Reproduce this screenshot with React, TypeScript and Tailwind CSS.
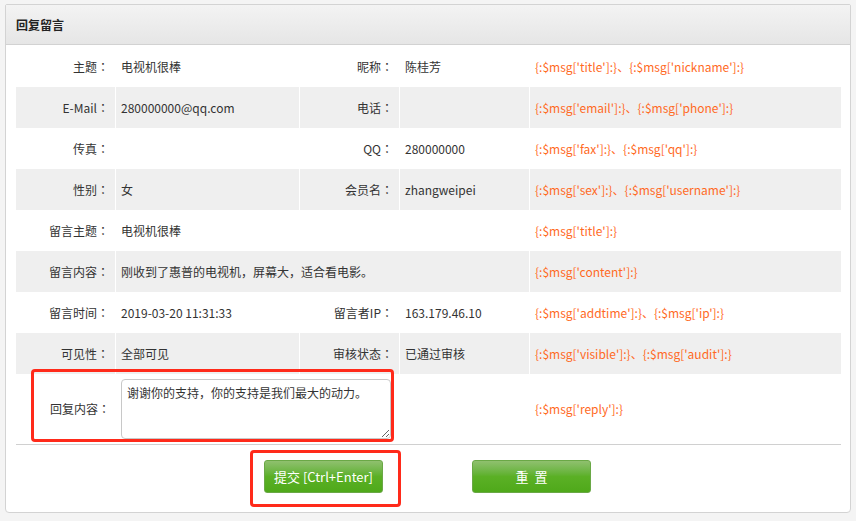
import React from "react";

const font = { fontFamily: '"Microsoft YaHei", "Noto Sans CJK SC", "Noto Sans", sans-serif' };
const colonFont = { fontFamily: '"Noto Sans CJK JP", "Noto Sans CJK TC", sans-serif' };

type Cell = { text?: string; kind: "label" | "value" | "code"; w: string };

function LabelText({ t }: { t: string }) {
  const base = t.replace(/：$/, "");
  return (
    <span>
      {base}
      <span style={colonFont}>：</span>
    </span>
  );
}

function Row({ gray, cells }: { gray?: boolean; cells: Cell[] }) {
  return (
    <div className={`flex h-[41px] ${gray ? "bg-[#efefef]" : "bg-white"}`}>
      {cells.map((c, i) => (
        <div
          key={i}
          className={`${c.w} flex items-center shrink-0 ${i < cells.length - 1 ? "border-r border-white" : ""} ${
            c.kind === "label" ? "justify-end pr-[6px] text-[#333]" : c.kind === "code" ? "pl-[5px] text-[#ff6a1f]" : "pl-[5px] text-[#333]"
          }`}
        >
          {c.kind === "label" && c.text ? <LabelText t={c.text} /> : c.text}
        </div>
      ))}
    </div>
  );
}

const L = (t: string, w = "w-[100px]"): Cell => ({ text: t, kind: "label", w });
const V = (t: string, w = "w-[184px]"): Cell => ({ text: t, kind: "value", w });
const C = (t: string): Cell => ({ text: t, kind: "code", w: "flex-1" });

export default function App() {
  return (
    <div className="w-[856px] h-[521px] bg-[#f4f4f4] pt-[4px] pl-[5px] text-[12px] relative" style={font}>
      <div className="w-[846px] h-[509px] bg-white border border-[#d3d3d3] rounded-b-[4px] rounded-t-[2px]">
        <div className="h-[40px] bg-gradient-to-b from-[#f3f3f3] to-[#e6e6e6] border-b border-[#d2d2d2] flex items-center pl-[10px] font-bold text-[#222]">
          回复留言
        </div>
        <div className="pl-[10px] pr-[9px] pt-[1px]">
          <Row cells={[L("主题："), V("电视机很棒"), L("昵称：", "w-[100px]"), V("陈桂芳", "w-[130px]"), C("{:$msg['title']:}、{:$msg['nickname']:}")]} />
          <Row gray cells={[L("E-Mail："), V("280000000@qq.com"), L("电话："), V("", "w-[130px]"), C("{:$msg['email']:}、{:$msg['phone']:}")]} />
          <Row cells={[L("传真："), V(""), L("QQ："), V("280000000", "w-[130px]"), C("{:$msg['fax']:}、{:$msg['qq']:}")]} />
          <Row gray cells={[L("性别："), V("女"), L("会员名："), V("zhangweipei", "w-[130px]"), C("{:$msg['sex']:}、{:$msg['username']:}")]} />
          <Row cells={[L("留言主题："), V("电视机很棒", "w-[414px]"), C("{:$msg['title']:}")]} />
          <Row gray cells={[L("留言内容："), V("刚收到了惠普的电视机，屏幕大，适合看电影。", "w-[414px]"), C("{:$msg['content']:}")]} />
          <Row cells={[L("留言时间："), V("2019-03-20 11:31:33"), L("留言者IP："), V("163.179.46.10", "w-[130px]"), C("{:$msg['addtime']:}、{:$msg['ip']:}")]} />
          <Row gray cells={[L("可见性："), V("全部可见"), L("审核状态："), V("已通过审核", "w-[130px]"), C("{:$msg['visible']:}、{:$msg['audit']:}")]} />
          <div className="flex h-[71px] border-b border-[#d0d0d0]">
            <div className="w-[100px] shrink-0 flex items-center justify-end pr-[6px] text-[#333]">
              <LabelText t="回复内容：" />
            </div>
            <div className="w-[414px] shrink-0 pl-[5px] pt-[5px]">
              <textarea
                className="w-[270px] h-[60px] border border-[#c8c8c8] rounded-[4px] px-[5px] py-[5px] text-[12px] text-[#333] leading-[16px] outline-none resize"
                style={font}
                defaultValue="谢谢你的支持，你的支持是我们最大的动力。"
              />
            </div>
            <div className="flex-1 flex items-center pl-[5px] text-[#ff6a1f]">{"{:$msg['reply']:}"}</div>
          </div>
          <div className="flex pt-[15px] pl-[248px] gap-[89px]">
            <button className="w-[119px] h-[33px] rounded-[3px] bg-gradient-to-b from-[#8fc06e] via-[#5bb025] to-[#4fa91a] text-white text-[13px] border border-[#6aa846]" style={font}>
              提交 [Ctrl+Enter]
            </button>
            <button className="w-[119px] h-[33px] rounded-[3px] bg-gradient-to-b from-[#8fc06e] via-[#5bb025] to-[#4fa91a] text-white text-[13px] border border-[#6aa846]" style={font}>
              重&nbsp;&nbsp;置
            </button>
          </div>
        </div>
      </div>
      <div className="absolute left-[31px] top-[369px] w-[363px] h-[73px] border-[3px] border-[#ff2a1a] rounded-[4px] pointer-events-none" />
      <div className="absolute left-[250px] top-[450px] w-[151px] h-[57px] border-[3px] border-[#ff2a1a] rounded-[4px] pointer-events-none" />
    </div>
  );
}
